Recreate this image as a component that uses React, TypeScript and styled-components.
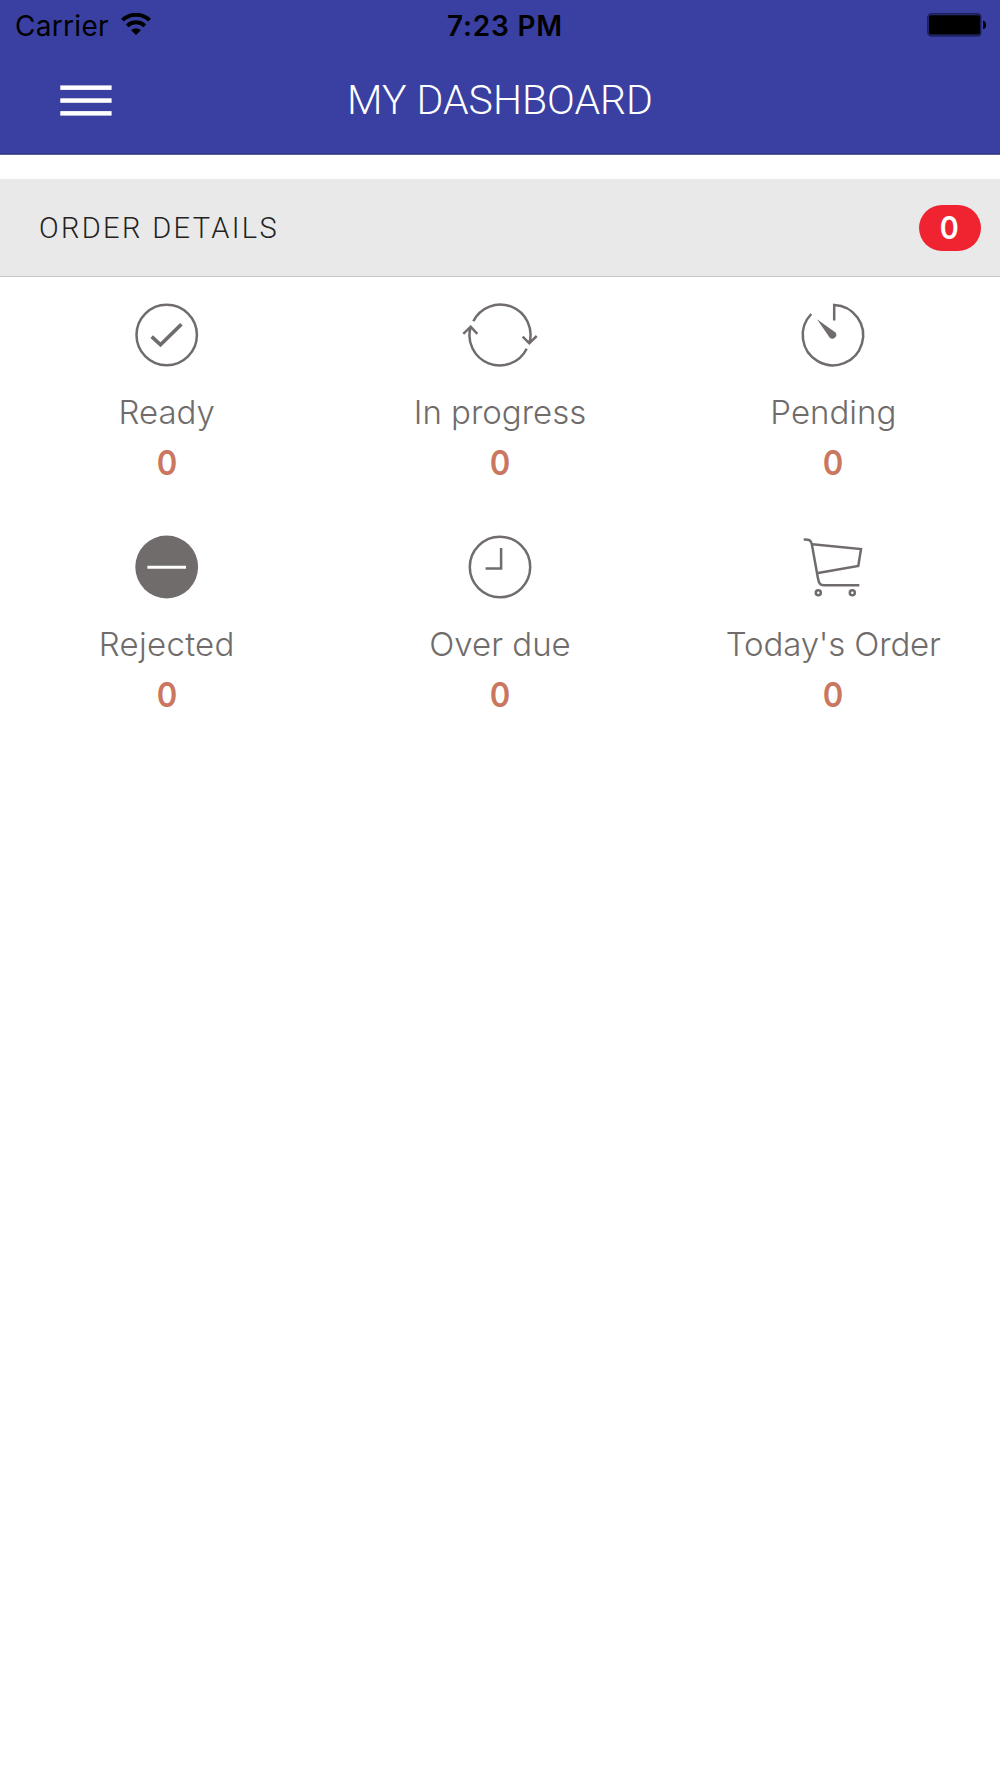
import React from "react";
import styled, { createGlobalStyle } from "styled-components";

const GlobalStyle = createGlobalStyle`
  * { box-sizing: border-box; }
  body { margin: 0; background: #fff; }
`;

const Screen = styled.div`
  display: flex;
  flex-direction: column;
  width: 1000px;
  min-height: 1778px;
  background: #fff;
  font-family: Inter, "Liberation Sans", sans-serif;
`;

const Header = styled.header`
  display: flex;
  flex-direction: column;
  height: 155px;
  background: #3940a2;
  border-bottom: 1px solid #5a5d92;
  box-shadow: inset 0 -1px 0 #31378f;
`;

const StatusBar = styled.div`
  display: grid;
  grid-template-columns: 1fr auto 1fr;
  align-items: center;
  height: 50px;
  padding: 1px 14px 0 15px;
  color: #000;
  font-size: 28px;
  line-height: 50px;
`;

const Carrier = styled.div`
  display: flex;
  align-items: center;
  gap: 12px;
  letter-spacing: 0.3px;

  svg {
    margin-bottom: 4px;
  }
`;

const Time = styled.div`
  padding-left: 9px;
  font-weight: 600;
  letter-spacing: 0.8px;
`;

const Battery = styled.div`
  display: flex;
  justify-content: flex-end;
  padding-bottom: 2px;
`;

const NavBar = styled.div`
  display: grid;
  grid-template-columns: 1fr auto 1fr;
  align-items: center;
  height: 100px;
  padding: 0 60px;
`;

const MenuButton = styled.button`
  display: block;
  padding: 0;
  border: 0;
  background: none;
  justify-self: start;
  line-height: 0;
`;

const Title = styled.h1`
  margin: 0;
  color: #fff;
  font: 300 41px/100px Roboto, sans-serif;
`;

const SectionHeader = styled.div`
  display: flex;
  align-items: center;
  justify-content: space-between;
  height: 98px;
  margin-top: 24px;
  padding: 0 19px 0 39px;
  background: #e9e9e9;
  border-bottom: 1px solid #c6c6ca;
`;

const SectionTitle = styled.h2`
  margin: 0;
  color: #222;
  font: 300 29px/40px Roboto, sans-serif;
  letter-spacing: 2.35px;
`;

const Badge = styled.span`
  width: 62px;
  height: 46px;
  padding-right: 2px;
  border-radius: 23px;
  background: #f02430;
  color: #fff;
  font-size: 31px;
  font-weight: 600;
  line-height: 46px;
  text-align: center;
`;

const Digit = styled.span`
  display: inline-block;
  transform: scaleX(0.93);
`;

const Grid = styled.div`
  display: grid;
  grid-template-columns: repeat(3, 1fr);
  grid-auto-rows: 231.7px;
  padding-top: 18px;
`;

const Cell = styled.div`
  display: flex;
  flex-direction: column;
  align-items: center;
`;

const Icon = styled.svg`
  width: 80px;
  height: 80px;
  fill: none;
  stroke: #706c6b;
  stroke-width: 2.5;
`;

const Label = styled.div<{ $spacing: number }>`
  margin-top: 12px;
  color: #706c6b;
  font-size: 33px;
  font-weight: 300;
  line-height: 50px;
  letter-spacing: ${(p) => p.$spacing}px;
  white-space: nowrap;
`;

const Count = styled.div`
  margin-top: 1px;
  color: #ca7760;
  font-size: 33.5px;
  font-weight: 600;
  line-height: 50px;
`;

const WifiIcon = () => (
  <svg width="30" height="22" viewBox="0 0 30 22" fill="none" stroke="#000" strokeWidth="3.9">
    <path d="M1.4 7.2a19.6 19.6 0 0 1 27.2 0" />
    <path d="M6.2 12.8a12.8 12.8 0 0 1 17.6 0" />
    <path d="M10.1 17.2a7 7 0 0 1 9.8 0L15 22z" fill="#000" stroke="none" />
  </svg>
);

const MenuIcon = () => (
  <svg width="52" height="31" viewBox="0 0 52 31" fill="#fff">
    <rect x="0.3" y="0.4" width="51.3" height="4.5" />
    <rect x="0.3" y="13.3" width="51.3" height="4.5" />
    <rect x="0.3" y="26.1" width="51.3" height="4.5" />
  </svg>
);

const BatteryIcon = () => (
  <svg width="60" height="24" viewBox="0 0 60 24">
    <rect x="1.8" y="0.8" width="53" height="22.2" rx="3.5" fill="#2a2f7c" stroke="#141744" strokeWidth="1.1" />
    <rect x="3" y="2.2" width="51" height="19.3" rx="1.8" />
    <path d="M57 7.8c4.3.5 4.3 7.8 0 8.3z" />
  </svg>
);

const items: { label: string; spacing: number; icon: React.ReactNode }[] = [
  {
    label: "Ready",
    spacing: 0,
    icon: (
      <>
        <circle cx="-0.3" r="30.2" />
        <path d="M-15.3 1.7L-6.5 9.8L14.4-10.7" strokeWidth="3.7" />
      </>
    ),
  },
  {
    label: "In progress",
    spacing: 0,
    icon: (
      <>
        <path d="M-26.7-13.7A30.2 30.2 0 0 1 29.3 8.3M22.7 1.7L29.3 8.3L36.7 1" />
        <path d="M26.7 13.7A30.2 30.2 0 0 1-29.3-8.3M-36.7-1.2L-29.3-8.3L-22.7-1.2" />
      </>
    ),
  },
  {
    label: "Pending",
    spacing: 0,
    icon: (
      <>
        <path d="M1.2-14.5V-30.1A30.2 30.2 0 1 1-21.7-21" />
        <path d="M-16-15.8L2.2-2.8A3.8 3.8 0 1 1-3.4 2.4Z" fill="#706c6b" stroke="none" />
      </>
    ),
  },
  {
    label: "Rejected",
    spacing: 0.3,
    icon: (
      <>
        <circle cx="-0.3" r="31.4" fill="#706c6b" stroke="none" />
        <path d="M-19.6 .3H19" stroke="#fff" strokeWidth="3" />
      </>
    ),
  },
  {
    label: "Over due",
    spacing: 0,
    icon: (
      <>
        <circle r="30.2" />
        <path d="M1.1-19V1.4H-14.4" />
      </>
    ),
  },
  {
    label: "Today's Order",
    spacing: -0.15,
    icon: (
      <>
        <path d="M-29.3-27.6C-24-27.8-22.2-27-21.2-23L-15.2 10.5C-14.2 16-13.2 18.3-9 18.3H26.3" />
        <path d="M-20.7-22.7L28-18L25.3-1L-15 6" />
        <circle cx="-14.7" cy="25.7" r="2.5" />
        <circle cx="19.3" cy="25.7" r="2.5" />
      </>
    ),
  },
];

export default function App() {
  return (
    <>
      <GlobalStyle />
      <Screen>
        <Header>
          <StatusBar>
            <Carrier>
              Carrier
              <WifiIcon />
            </Carrier>
            <Time>7:23 PM</Time>
            <Battery>
              <BatteryIcon />
            </Battery>
          </StatusBar>
          <NavBar>
            <MenuButton aria-label="Menu">
              <MenuIcon />
            </MenuButton>
            <Title>MY DASHBOARD</Title>
          </NavBar>
        </Header>
        <SectionHeader>
          <SectionTitle>ORDER DETAILS</SectionTitle>
          <Badge>
            <Digit>0</Digit>
          </Badge>
        </SectionHeader>
        <Grid>
          {items.map((item) => (
            <Cell key={item.label}>
              <Icon viewBox="-40 -40 80 80">{item.icon}</Icon>
              <Label $spacing={item.spacing}>{item.label}</Label>
              <Count>
                <Digit>0</Digit>
              </Count>
            </Cell>
          ))}
        </Grid>
      </Screen>
    </>
  );
}
